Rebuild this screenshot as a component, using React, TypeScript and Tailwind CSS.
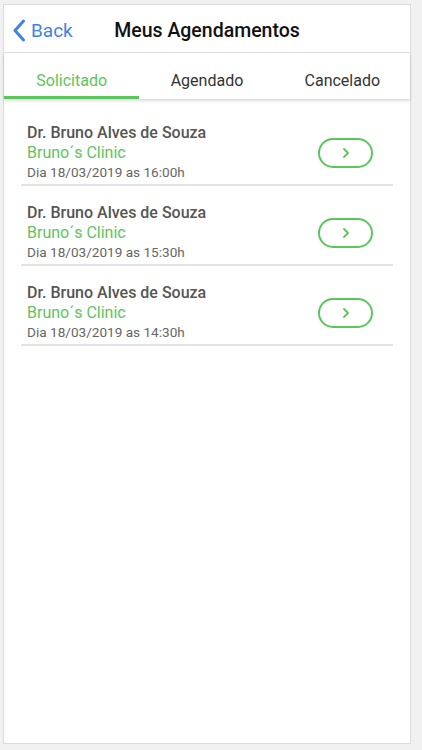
const items = [
  { doctor: 'Dr. Bruno Alves de Souza', clinic: 'Bruno´s Clinic', date: 'Dia 18/03/2019 as 16:00h' },
  { doctor: 'Dr. Bruno Alves de Souza', clinic: 'Bruno´s Clinic', date: 'Dia 18/03/2019 as 15:30h' },
  { doctor: 'Dr. Bruno Alves de Souza', clinic: 'Bruno´s Clinic', date: 'Dia 18/03/2019 as 14:30h' },
];

const tabs = ['Solicitado', 'Agendado', 'Cancelado'];

export default function App() {
  return (
    <div
      className="h-[750px] w-[422px] bg-[#f1f1f1] pl-[3px] pt-[4px]"
      style={{ fontFamily: 'Roboto, "Noto Sans", sans-serif' }}
    >
      <div className="flex h-[740px] w-[408px] flex-col border border-[#dcdcdc] bg-white">
        {/* Header */}
        <div className="relative flex h-[48px] items-center justify-center border-b border-[#dddddd] pt-[4px]">
          <button className="absolute left-[8px] top-[14px] flex items-center gap-[5px] text-[#3f83e6]">
            <svg width="14" height="23" viewBox="0 0 14 23" fill="none">
              <path d="M11.5 2 L3 11.5 L11.5 21" stroke="currentColor" strokeWidth="3" strokeLinecap="round" strokeLinejoin="round" />
            </svg>
            <span className="text-[19px] leading-none">Back</span>
          </button>
          <h1 className="text-[19.5px] font-medium text-[#111]">Meus Agendamentos</h1>
        </div>

        {/* Tabs */}
        <div className="grid h-[46px] grid-cols-3 shadow-[0_2px_3px_rgba(0,0,0,0.15)]">
          {tabs.map((t, i) => (
            <div
              key={t}
              className={`flex items-center justify-center pt-[13px] text-[16px] ${
                i === 0 ? 'border-b-[3px] border-[#5cc55c] text-[#5cc55c]' : 'border-b-[3px] border-transparent text-[#333]'
              }`}
            >
              {t}
            </div>
          ))}
        </div>

        {/* List */}
        <div className="mx-[17px] mt-[7px]">
          {items.map((it, i) => (
            <div key={i} className="flex h-[80px] items-start border-b-2 border-[#e3e3e3] pl-[6px] pr-[20px]">
              <div className="flex-1 pt-[17px]">
                <p className="text-[16px] font-medium leading-[20px] text-[#555]">{it.doctor}</p>
                <p className="text-[16px] leading-[20px] text-[#5cc55c]">{it.clinic}</p>
                <p className="text-[13.6px] leading-[19px] text-[#666]">{it.date}</p>
              </div>
              <button className="mt-[32px] flex h-[30px] w-[55px] items-center justify-center rounded-full border-2 border-[#5cc55c] text-[#5cc55c]">
                <svg width="8" height="12" viewBox="0 0 8 12" fill="none">
                  <path d="M2 2 L6 6 L2 10" stroke="currentColor" strokeWidth="1.8" strokeLinecap="round" strokeLinejoin="round" />
                </svg>
              </button>
            </div>
          ))}
        </div>
      </div>
    </div>
  );
}
